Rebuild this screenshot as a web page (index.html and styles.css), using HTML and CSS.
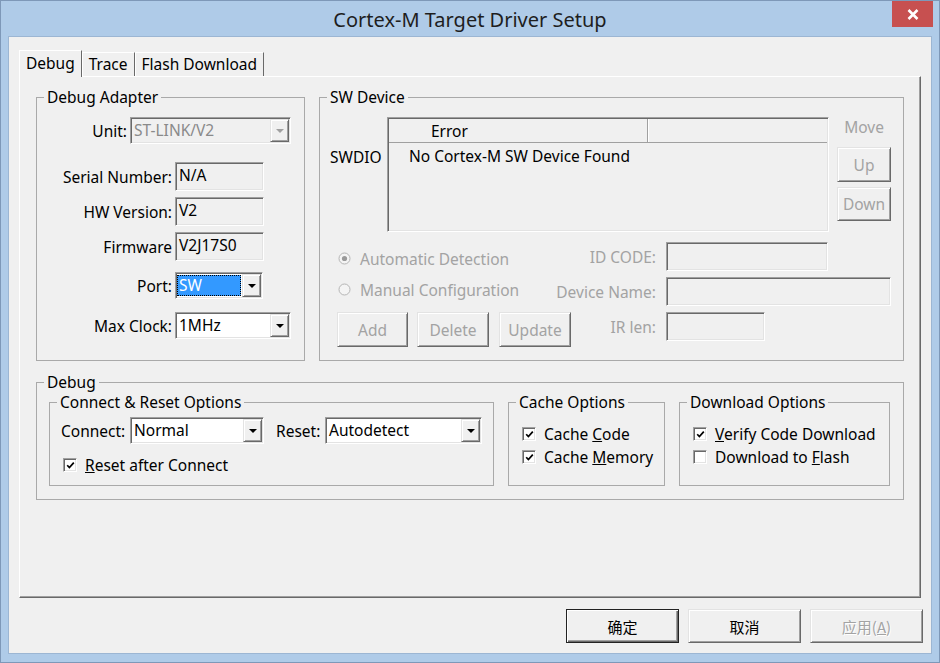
FILE: index.html
```html
<!DOCTYPE html>
<html>

<head>
  <meta charset="utf-8">
  <link rel="stylesheet" href="styles.css">
</head>

<body>
  <div class="window">
    <div class="titlebar">
      <span class="title">Cortex-M Target Driver Setup</span>
      <span class="close-btn">
        <svg width="12" height="11" viewBox="0 0 12 11"><path d="M1.5 1 L10.5 10 M10.5 1 L1.5 10" stroke="#fff" stroke-width="2.6" fill="none"/></svg>
      </span>
    </div>

    <div class="client">
      <div class="tabs">
        <div class="tab active">Debug</div>
        <div class="tab">Trace</div>
        <div class="tab">Flash Download</div>
      </div>

      <div class="tab-panel">
        <div class="top-row">
          <!-- Debug Adapter -->
          <fieldset class="group adapter">
            <legend>Debug Adapter</legend>
            <div class="row unit-row">
              <span class="lbl unit-lbl">Unit:</span>
              <div class="combo sunken disabled w-unit">
                <span class="combo-text">ST-LINK/V2</span>
                <span class="combo-btn raised"><i class="arrow"></i></span>
              </div>
            </div>
            <div class="row info-row serial">
              <span class="lbl info-lbl">Serial Number:</span>
              <div class="readonly sunken">N/A</div>
            </div>
            <div class="row info-row">
              <span class="lbl info-lbl">HW Version:</span>
              <div class="readonly sunken">V2</div>
            </div>
            <div class="row info-row">
              <span class="lbl info-lbl">Firmware</span>
              <div class="readonly sunken">V2J17S0</div>
            </div>
            <div class="row port-row">
              <span class="lbl info-lbl">Port:</span>
              <div class="combo sunken w-port">
                <span class="combo-text selected">SW</span>
                <span class="combo-btn raised"><i class="arrow"></i></span>
              </div>
            </div>
            <div class="row clock-row">
              <span class="lbl info-lbl">Max Clock:</span>
              <div class="combo sunken w-clock">
                <span class="combo-text">1MHz</span>
                <span class="combo-btn raised"><i class="arrow"></i></span>
              </div>
            </div>
          </fieldset>

          <!-- SW Device -->
          <fieldset class="group sw-device">
            <legend>SW Device</legend>
            <div class="sw-top">
              <span class="swdio">SWDIO</span>
              <div class="listbox sunken">
                <div class="list-head">
                  <span class="col-error">Error</span>
                  <span class="col-rest"></span>
                </div>
                <div class="list-entry">No Cortex-M SW Device Found</div>
              </div>
              <div class="side-btns">
                <span class="move-lbl">Move</span>
                <span class="btn raised disabled-text up-btn">Up</span>
                <span class="btn raised disabled-text down-btn">Down</span>
              </div>
            </div>

            <div class="sw-row first">
              <div class="radio-item">
                <svg width="13" height="13" viewBox="0 0 13 13"><circle cx="6.5" cy="6.5" r="5.5" fill="#f4f4f4" stroke="#b5b5b5"/><circle cx="6.5" cy="6.5" r="2.6" fill="#9a9a9a"/></svg>
                <span>Automatic Detection</span>
              </div>
              <div class="field-right">
                <span class="right-lbl">ID CODE:</span>
                <div class="edit sunken w-id"></div>
              </div>
            </div>
            <div class="sw-row second">
              <div class="radio-item">
                <svg width="13" height="13" viewBox="0 0 13 13"><circle cx="6.5" cy="6.5" r="5.5" fill="#f4f4f4" stroke="#b5b5b5"/></svg>
                <span>Manual Configuration</span>
              </div>
              <div class="field-right">
                <span class="right-lbl">Device Name:</span>
                <div class="edit sunken w-name"></div>
              </div>
            </div>
            <div class="sw-row last">
              <div class="sw-buttons">
                <span class="btn raised disabled-text w-add">Add</span>
                <span class="btn raised disabled-text w-del">Delete</span>
                <span class="btn raised disabled-text w-upd">Update</span>
              </div>
              <div class="field-right">
                <span class="right-lbl">IR len:</span>
                <div class="edit sunken w-ir"></div>
              </div>
            </div>
          </fieldset>
        </div>

        <!-- Debug -->
        <fieldset class="group debug-group">
          <legend>Debug</legend>
          <div class="debug-inner">
            <fieldset class="group connect-group">
              <legend>Connect &amp; Reset Options</legend>
              <div class="connect-row">
                <span class="lbl connect-lbl">Connect:</span>
                <div class="combo sunken w-connect">
                  <span class="combo-text">Normal</span>
                  <span class="combo-btn raised"><i class="arrow"></i></span>
                </div>
                <span class="lbl reset-lbl">Reset:</span>
                <div class="combo sunken w-reset">
                  <span class="combo-text">Autodetect</span>
                  <span class="combo-btn raised"><i class="arrow"></i></span>
                </div>
              </div>
              <div class="check-item reset-after">
                <span class="check sunken">
                  <svg width="9" height="9" viewBox="0 0 9 9"><path d="M1.2 4.2 L3.4 6.6 L7.8 1.6" stroke="#000" stroke-width="1.7" fill="none"/></svg>
                </span>
                <span><u>R</u>eset after Connect</span>
              </div>
            </fieldset>

            <fieldset class="group cache-group">
              <legend>Cache Options</legend>
              <div class="check-list">
                <div class="check-item">
                  <span class="check sunken">
                    <svg width="9" height="9" viewBox="0 0 9 9"><path d="M1.2 4.2 L3.4 6.6 L7.8 1.6" stroke="#000" stroke-width="1.7" fill="none"/></svg>
                  </span>
                  <span>Cache <u>C</u>ode</span>
                </div>
                <div class="check-item">
                  <span class="check sunken">
                    <svg width="9" height="9" viewBox="0 0 9 9"><path d="M1.2 4.2 L3.4 6.6 L7.8 1.6" stroke="#000" stroke-width="1.7" fill="none"/></svg>
                  </span>
                  <span>Cache <u>M</u>emory</span>
                </div>
              </div>
            </fieldset>

            <fieldset class="group download-group">
              <legend>Download Options</legend>
              <div class="check-list">
                <div class="check-item">
                  <span class="check sunken">
                    <svg width="9" height="9" viewBox="0 0 9 9"><path d="M1.2 4.2 L3.4 6.6 L7.8 1.6" stroke="#000" stroke-width="1.7" fill="none"/></svg>
                  </span>
                  <span><u>V</u>erify Code Download</span>
                </div>
                <div class="check-item">
                  <span class="check sunken"></span>
                  <span>Download to <u>F</u>lash</span>
                </div>
              </div>
            </fieldset>
          </div>
        </fieldset>
      </div>

      <div class="dialog-buttons">
        <span class="btn dlg-btn default-btn">确定</span>
        <span class="btn dlg-btn raised">取消</span>
        <span class="btn dlg-btn raised dlg-disabled">应用(<u>A</u>)</span>
      </div>
    </div>
  </div>
</body>

</html>
```

FILE: styles.css
```css
:root {
  --face: #f0f0f0;
  --light: #ffffff;
  --shadow: #a0a0a0;
  --dark-shadow: #696969;
  --frame: #afcbe8;
  --gray-text: #a3a3a3;
}

* {
  box-sizing: border-box;
}

body {
  margin: 0;
  width: 940px;
  height: 663px;
  overflow: hidden;
  font-family: 'Noto Sans', 'Noto Sans CJK SC', sans-serif;
  font-size: 15.5px;
  color: #000;
}

.window {
  width: 940px;
  height: 663px;
  border: 1px solid #7e98b8;
  background: var(--frame);
  display: flex;
  flex-direction: column;
  position: relative;
}

.titlebar {
  height: 35px;
  flex: none;
  display: flex;
  align-items: center;
  justify-content: center;
}

.title {
  font-size: 20px;
  color: #1e1e1e;
  margin-top: 2px;
}

.close-btn {
  position: absolute;
  top: 0;
  right: 6px;
  width: 41px;
  height: 26px;
  background: #c75050;
  display: flex;
  align-items: center;
  justify-content: center;
}

.client {
  flex: 1;
  margin: 0 7px 8px 7px;
  border: 1px solid #9cb6d3;
  background: var(--face);
  padding: 13px 10px 10px 10px;
  display: flex;
  flex-direction: column;
}

/* tabs */
.tabs {
  height: 26px;
  flex: none;
  display: flex;
  align-items: flex-end;
  position: relative;
  z-index: 1;
}

.tab {
  height: 24px;
  padding: 0 6px;
  line-height: 22px;
  border: 1px solid;
  border-bottom: none;
  border-color: var(--light) var(--dark-shadow) transparent var(--light);
  background: var(--face);
}

.tab.active {
  height: 27px;
  margin-bottom: -1px;
  line-height: 24px;
}

.tab-panel {
  flex: 1;
  border: 1px solid;
  border-color: var(--light) var(--dark-shadow) var(--dark-shadow) var(--light);
  box-shadow: inset -1px -1px 0 var(--shadow);
  padding: 10px 0 0 16px;
}

/* group boxes */
.group {
  margin: 0;
  padding: 0;
  min-inline-size: 0;
  border: 1px solid #a9a9a9;
}

.group legend {
  margin-left: 7px;
  padding: 0 3px;
  line-height: 20px;
}

.top-row {
  display: flex;
  align-items: flex-start;
  gap: 14px;
}

.adapter {
  width: 269px;
  height: 274px;
}

.sw-device {
  width: 585px;
  height: 274px;
}

.row {
  display: flex;
  align-items: center;
}

.lbl {
  text-align: right;
  white-space: nowrap;
}

.unit-lbl {
  width: 90px;
  margin-right: 3px;
}

.info-lbl {
  width: 135px;
  margin-right: 3px;
}

.unit-row {
  margin-top: 10px;
}

.info-row {
  margin-top: 6px;
}

.info-row.serial {
  margin-top: 18px;
}

.port-row {
  margin-top: 11px;
}

.clock-row {
  margin-top: 13px;
}

/* 3d borders */
.sunken {
  border: 1px solid;
  border-color: var(--shadow) var(--light) var(--light) var(--shadow);
  box-shadow: inset 1px 1px 0 var(--dark-shadow), inset -1px -1px 0 #e3e3e3;
}

.raised {
  border: 1px solid;
  border-color: #e3e3e3 var(--dark-shadow) var(--dark-shadow) #e3e3e3;
  box-shadow: inset 1px 1px 0 var(--light), inset -1px -1px 0 var(--shadow);
}

.readonly {
  width: 89px;
  height: 29px;
  padding: 0 3px;
  line-height: 25px;
  background: var(--face);
}

/* combo boxes */
.combo {
  display: flex;
  height: 27px;
  padding: 1px;
  background: var(--light);
}

.combo-text {
  flex: 1;
  padding-left: 2px;
  line-height: 23px;
  white-space: nowrap;
}

.combo-text.selected {
  background: #3399ff;
  color: #fff;
  margin: 1px 1px 1px 0;
  line-height: 21px;
  outline: 1px dotted #000;
  outline-offset: -1px;
}

.combo-btn {
  width: 19px;
  background: var(--face);
  display: flex;
  align-items: center;
  justify-content: center;
}

.arrow {
  width: 0;
  height: 0;
  border-left: 4px solid transparent;
  border-right: 4px solid transparent;
  border-top: 4px solid #000;
}

.combo.disabled {
  background: var(--face);
}

.combo.disabled .combo-text {
  color: #8a8a8a;
}

.combo.disabled .arrow {
  border-top-color: var(--shadow);
}

.w-unit {
  width: 161px;
}

.w-port {
  width: 88px;
}

.w-clock {
  width: 116px;
}

.w-connect {
  width: 134px;
}

.w-reset {
  width: 157px;
}

/* SW device */
.sw-top {
  display: flex;
  align-items: flex-start;
  margin-top: 10px;
  padding-left: 10px;
}

.swdio {
  width: 57px;
  margin-top: 30px;
  line-height: 20px;
}

.listbox {
  width: 442px;
  height: 115px;
  padding: 1px;
  background: var(--face);
}

.list-head {
  display: flex;
  height: 24px;
  border-bottom: 1px solid var(--shadow);
}

.col-error {
  width: 259px;
  padding-left: 42px;
  line-height: 24px;
  border-right: 1px solid var(--shadow);
  box-shadow: 1px 0 0 var(--light);
}

.list-entry {
  margin-top: 3px;
  padding-left: 20px;
  line-height: 20px;
}

.side-btns {
  margin-left: 8px;
  width: 54px;
  display: flex;
  flex-direction: column;
}

.move-lbl {
  line-height: 20px;
  text-align: center;
  color: var(--gray-text);
}

.btn {
  display: flex;
  align-items: center;
  justify-content: center;
  background: var(--face);
  white-space: nowrap;
}

.disabled-text {
  color: var(--gray-text);
}

.up-btn {
  height: 35px;
  margin-top: 10px;
}

.down-btn {
  height: 34px;
  margin-top: 5px;
}

.sw-row {
  display: grid;
  grid-template-columns: minmax(0, 1fr) 355px;
  align-items: center;
  height: 29px;
  margin-top: 6px;
  padding: 0 12px 0 17px;
}

.sw-row.first {
  margin-top: 10px;
}

.sw-row.last {
  align-items: start;
  height: 35px;
}

.radio-item {
  display: flex;
  align-items: center;
  gap: 9px;
  padding-left: 1px;
  color: var(--gray-text);
  white-space: nowrap;
}

.sw-row.first .radio-item {
  margin-top: 4px;
}

.sw-row.second .radio-item {
  margin-top: -4px;
}

.field-right {
  display: flex;
  align-items: center;
}

.right-lbl {
  width: 120px;
  margin-right: 10px;
  text-align: right;
  color: var(--gray-text);
  white-space: nowrap;
}

.edit {
  height: 29px;
  background: var(--face);
}

.w-id {
  width: 162px;
}

.w-name {
  width: 225px;
}

.w-ir {
  width: 99px;
}

.sw-buttons {
  display: flex;
  gap: 9px;
}

.sw-buttons .btn {
  flex: none;
  height: 35px;
}

.w-add {
  width: 71px;
}

.w-del {
  width: 72px;
}

.w-upd {
  width: 72px;
  margin-left: 1px;
}

/* Debug group */
.debug-group {
  width: 868px;
  height: 128px;
  margin-top: 11px;
}

.debug-inner {
  display: flex;
  align-items: flex-start;
  gap: 14px;
  padding-left: 12px;
}

.connect-group {
  width: 445px;
  height: 94px;
}

.cache-group {
  width: 157px;
  height: 94px;
}

.download-group {
  width: 211px;
  height: 94px;
}

.connect-row {
  display: flex;
  align-items: center;
  margin-top: 5px;
  padding-left: 11px;
}

.connect-lbl {
  width: 66px;
  margin-right: 3px;
  text-align: left;
}

.reset-lbl {
  width: 46px;
  margin: 0 3px 0 12px;
  text-align: left;
}

.check-item {
  display: flex;
  align-items: center;
  gap: 8px;
  line-height: 20px;
  white-space: nowrap;
}

.check {
  width: 14px;
  height: 14px;
  background: var(--light);
  display: flex;
  align-items: center;
  justify-content: center;
}

.reset-after {
  margin-top: 11px;
  padding-left: 13px;
}

.check-list {
  margin-top: 12px;
  padding-left: 13px;
  display: flex;
  flex-direction: column;
  gap: 3px;
}

/* dialog buttons */
.dialog-buttons {
  flex: none;
  display: flex;
  justify-content: flex-end;
  gap: 9px;
  margin: 11px -2px 0 0;
  font-family: 'Noto Sans CJK SC', sans-serif;
  font-size: 15px;
}

.dlg-btn {
  width: 113px;
  height: 34px;
}

.default-btn {
  border: 1px solid #222;
  box-shadow: inset 1px 1px 0 var(--light), inset -1px -1px 0 var(--dark-shadow), inset -2px -2px 0 var(--shadow);
}

.dlg-disabled {
  color: var(--gray-text);
  text-shadow: 1px 1px 0 var(--light);
}
```
